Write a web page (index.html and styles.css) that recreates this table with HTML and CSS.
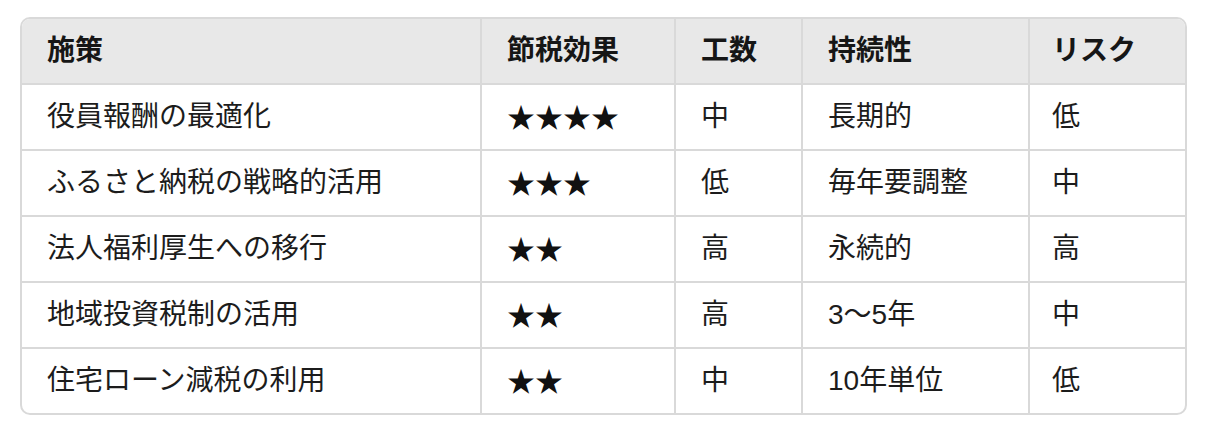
FILE: index.html
```html
<!DOCTYPE html>
<html lang="ja">
<head>
<meta charset="utf-8">
<link rel="stylesheet" href="styles.css">
</head>
<body>
<div class="wrap">
<table class="tbl">
<colgroup>
<col class="c1"><col class="c2"><col class="c3"><col class="c4"><col class="c5">
</colgroup>
<thead>
<tr><th>施策</th><th>節税効果</th><th>工数</th><th>持続性</th><th>リスク</th></tr>
</thead>
<tbody>
<tr><td>役員報酬の最適化</td><td class="stars">★★★★</td><td>中</td><td>長期的</td><td>低</td></tr>
<tr><td>ふるさと納税の戦略的活用</td><td class="stars">★★★</td><td>低</td><td>毎年要調整</td><td>中</td></tr>
<tr><td>法人福利厚生への移行</td><td class="stars">★★</td><td>高</td><td>永続的</td><td>高</td></tr>
<tr><td>地域投資税制の活用</td><td class="stars">★★</td><td>高</td><td>3〜5年</td><td>中</td></tr>
<tr><td>住宅ローン減税の利用</td><td class="stars">★★</td><td>中</td><td>10年単位</td><td>低</td></tr>
</tbody>
</table>
</div>
</body>
</html>
```
FILE: styles.css
```css
html, body {
  margin: 0;
  padding: 0;
  background: #ffffff;
}
body {
  padding: 17px 20px;
  font-family: "Liberation Sans", "Noto Sans CJK JP", sans-serif;
  color: #1c1c1c;
}
.wrap {
  width: 1167px;
  box-sizing: border-box;
  border: 2px solid #d9d9d9;
  border-radius: 10px;
  overflow: hidden;
}
.tbl {
  width: 100%;
  border-collapse: collapse;
  table-layout: fixed;
  font-size: 28px;
}
.c1 { width: 459px; }
.c2 { width: 194px; }
.c3 { width: 127px; }
.c4 { width: 227px; }
.c5 { width: auto; }
.tbl th, .tbl td {
  border: 2px solid #d9d9d9;
  padding: 0 24px 0 25px;
  height: 64px;
  text-align: left;
  vertical-align: middle;
  line-height: 1.2;
  white-space: nowrap;
}
.tbl th {
  background: #e8e8e8;
  font-weight: bold;
  color: #161616;
}
.tbl tr > :first-child { border-left: none; }
.tbl tr > :last-child { border-right: none; padding-left: 22px; }
.tbl thead tr > * { border-top: none; }
.tbl tbody tr:last-child > * { border-bottom: none; }
.stars {
  font-family: "Noto Sans CJK JP", sans-serif;
  color: #111111;
}
```
